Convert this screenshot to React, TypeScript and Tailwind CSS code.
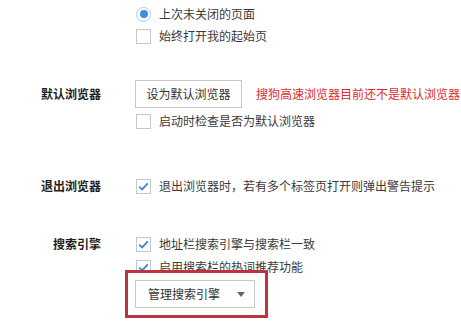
import React from 'react';

const font = { fontFamily: '"Noto Sans CJK SC", "Microsoft YaHei", sans-serif' };

function Check({ checked }: { checked?: boolean }) {
	return (
		<span className="w-[15px] h-[15px] border border-[#c6c6c6] bg-white flex items-center justify-center shrink-0">
			{checked && (
				<svg width="11" height="9" viewBox="0 0 11 9">
					<path d="M1.2 4.6 L4.1 7.4 L9.8 1.4" fill="none" stroke="#3f87d2" strokeWidth="1.8" />
				</svg>
			)}
		</span>
	);
}

function Radio() {
	return (
		<span className="w-[15px] h-[15px] rounded-full border border-[#a9cdef] bg-white flex items-center justify-center shrink-0">
			<span className="w-[8px] h-[8px] rounded-full bg-[#3d8ee3]" />
		</span>
	);
}

function Option({ children, control, className = '' }: { children: React.ReactNode; control: React.ReactNode; className?: string }) {
	return (
		<div className={`flex items-center h-[22px] ${className}`}>
			<div className="w-[136px] shrink-0" />
			{control}
			<span className="ml-[8px] text-[#3a3a3a] whitespace-nowrap">{children}</span>
		</div>
	);
}

function Label({ children }: { children: React.ReactNode }) {
	return <div className="w-[101px] shrink-0 text-right font-bold text-[#1e1e1e]">{children}</div>;
}

export default function App() {
	return (
		<div className="w-[461px] h-[322px] bg-white overflow-hidden text-[12px] leading-none pt-[3px]" style={font}>
			<Option control={<Radio />}>上次未关闭的页面</Option>
			<Option control={<Check />}>始终打开我的起始页</Option>

			<div className="flex items-center h-[28px] mt-[33px]">
				<Label>默认浏览器</Label>
				<button className="ml-[34px] w-[107px] h-[28px] border border-[#c8c8c8] bg-white text-[#333] shrink-0">
					设为默认浏览器
				</button>
				<span className="ml-[14px] text-[#dd2b30] whitespace-nowrap">搜狗高速浏览器目前还不是默认浏览器</span>
			</div>
			<Option control={<Check />} className="mt-[2px]">启动时检查是否为默认浏览器</Option>

			<div className="flex items-center h-[22px] mt-[43px]">
				<Label>退出浏览器</Label>
				<div className="ml-[35px]"><Check checked /></div>
				<span className="ml-[8px] text-[#3a3a3a] whitespace-nowrap">退出浏览器时，若有多个标签页打开则弹出警告提示</span>
			</div>

			<div className="flex items-center h-[22px] mt-[36px]">
				<Label>搜索引擎</Label>
				<div className="ml-[35px]"><Check checked /></div>
				<span className="ml-[8px] text-[#3a3a3a] whitespace-nowrap">地址栏搜索引擎与搜索栏一致</span>
			</div>
			<Option control={<Check checked />} className="mt-[1px]">启用搜索栏的热词推荐功能</Option>

			<div className="relative ml-[125px] -mt-[8px] w-[143px] h-[48px] border-[3px] border-[#b93340] bg-white pl-[7px] pt-[7px]">
				<div className="w-[120px] h-[28px] border border-[#c8c8c8] bg-white flex items-center pl-[12px] text-[#333]">
					<span>管理搜索引擎</span>
					<svg className="ml-[17px]" width="8" height="5" viewBox="0 0 8 5">
						<path d="M0 0 H8 L4 5 Z" fill="#666" />
					</svg>
				</div>
			</div>
		</div>
	);
}
